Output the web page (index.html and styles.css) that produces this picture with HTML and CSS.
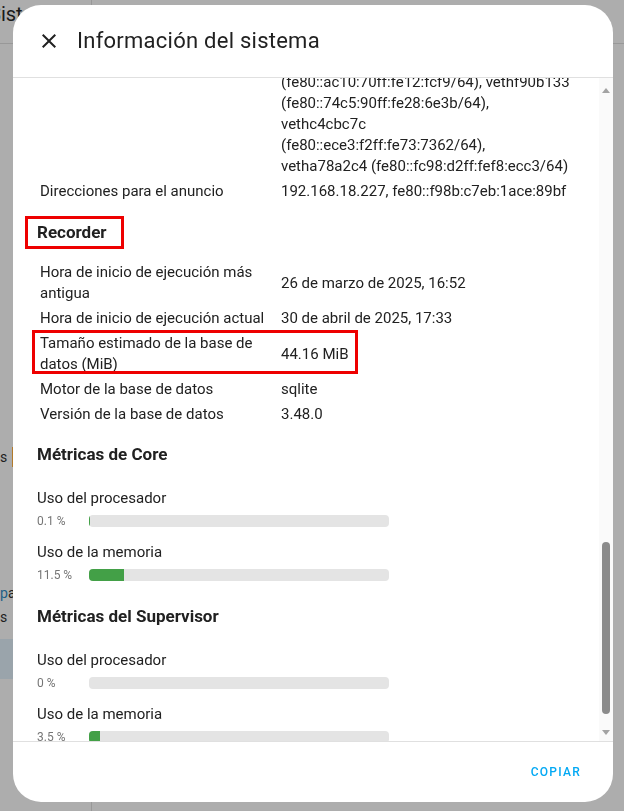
FILE: index.html
```html
<!DOCTYPE html>
<html>
<head>
<meta charset="UTF-8">
<title>Información del sistema</title>
<meta name="viewport" content="width=device-width, initial-scale=1.0">
<link rel="stylesheet" href="styles.css">
</head>
<body>

	<div class="page">
		<aside class="page-side">
			<div class="side-head">Sistema</div>
			<div class="side-item side-warn">s</div>
			<div class="side-item side-link"><span>p</span>a</div>
			<div class="side-item side-last">s</div>
			<div class="side-block"></div>
		</aside>
		<main class="page-main">
			<div class="main-head"></div>
		</main>
	</div>

	<div class="dialog">
		<header class="dialog-head">
			<svg class="close" viewBox="0 0 24 24" width="24" height="24">
				<path d="M19,6.41L17.59,5L12,10.59L6.41,5L5,6.41L10.59,12L5,17.59L6.41,19L12,13.41L17.59,19L19,17.59L13.41,12L19,6.41Z"/>
			</svg>
			<h2 class="dialog-title">Información del sistema</h2>
		</header>

		<div class="dialog-body">
			<div class="scroll">
				<div class="content">

					<table class="info">
						<tr>
							<td></td>
							<td>(fe80::ac10:70ff:fe12:fcf9/64), vethf90b133<br>(fe80::74c5:90ff:fe28:6e3b/64),<br>vethc4cbc7c<br>(fe80::ece3:f2ff:fe73:7362/64),<br>vetha78a2c4 (fe80::fc98:d2ff:fef8:ecc3/64)</td>
						</tr>
						<tr>
							<td>Direcciones para el anuncio</td>
							<td>192.168.18.227, fe80::f98b:c7eb:1ace:89bf</td>
						</tr>
					</table>

					<h3 class="section-title recorder-title">Recorder</h3>

					<table class="info">
						<tr>
							<td>Hora de inicio de ejecución más antigua</td>
							<td>26 de marzo de 2025, 16:52</td>
						</tr>
						<tr>
							<td>Hora de inicio de ejecución actual</td>
							<td>30 de abril de 2025, 17:33</td>
						</tr>
						<tr>
							<td class="marked">Tamaño estimado de la base de datos (MiB)</td>
							<td>44.16 MiB</td>
						</tr>
						<tr>
							<td>Motor de la base de datos</td>
							<td>sqlite</td>
						</tr>
						<tr>
							<td>Versión de la base de datos</td>
							<td>3.48.0</td>
						</tr>
					</table>

					<h3 class="section-title metrics-title">Métricas de Core</h3>

					<div class="metrics">
						<div class="metric">
							<div class="metric-label">Uso del procesador</div>
							<div class="metric-row">
								<span class="metric-value">0.1 %</span>
								<div class="bar"><div class="bar-fill" style="width: 0.1%"></div></div>
							</div>
						</div>
						<div class="metric">
							<div class="metric-label">Uso de la memoria</div>
							<div class="metric-row">
								<span class="metric-value">11.5 %</span>
								<div class="bar"><div class="bar-fill" style="width: 11.5%"></div></div>
							</div>
						</div>
					</div>

					<h3 class="section-title metrics-title next-title">Métricas del Supervisor</h3>

					<div class="metrics">
						<div class="metric">
							<div class="metric-label">Uso del procesador</div>
							<div class="metric-row">
								<span class="metric-value">0 %</span>
								<div class="bar"><div class="bar-fill" style="width: 0%"></div></div>
							</div>
						</div>
						<div class="metric">
							<div class="metric-label">Uso de la memoria</div>
							<div class="metric-row">
								<span class="metric-value">3.5 %</span>
								<div class="bar"><div class="bar-fill" style="width: 3.5%"></div></div>
							</div>
						</div>
					</div>

				</div>
			</div>

			<div class="scrollbar">
				<div class="sb-up"></div>
				<div class="sb-track"><div class="sb-thumb"></div></div>
				<div class="sb-down"></div>
			</div>
		</div>

		<footer class="dialog-foot">
			<button type="button" class="copy">Copiar</button>
		</footer>
	</div>

</body>
</html>
```

FILE: styles.css
```css
body {
	margin: 0;
	font-family: Roboto, "Noto Sans", sans-serif;
	color: #212121;
	overflow: hidden;
}

/* page behind the dialog, under the scrim */

.page {
	display: grid;
	grid-template-columns: 92px 1fr;
	height: 100vh;
	background: #adadad;
}

.page-side {
	border-right: 1px solid #989898;
	overflow: hidden;
}

.side-head {
	height: 43px;
	border-bottom: 1px solid #989898;
	font-size: 20px;
	line-height: 28px;
	text-indent: -11px;
	color: #1a1a1a;
}

.side-item {
	font-size: 14px;
	line-height: 20px;
	color: #1e1e1e;
}

.side-warn {
	width: 12px;
	margin-top: 403px;
	border-right: 1px solid #b27a2a;
}

.side-link {
	margin-top: 116px;
}

.side-link span {
	color: #1d5f86;
}

.side-last {
	margin-top: 4px;
}

.side-block {
	width: 13px;
	height: 40px;
	margin-top: 12px;
	background: #9aa4ab;
	border-bottom: 18px solid #adadad;
	box-shadow: 0 19px 0 -18px #989898;
}

.main-head {
	height: 43px;
	border-bottom: 1px solid #989898;
}

/* dialog */

.dialog {
	position: fixed;
	top: 5px;
	left: 13px;
	width: 600px;
	height: 797px;
	display: flex;
	flex-direction: column;
	background: #fff;
	border-radius: 28px;
	overflow: hidden;
}

.dialog-head {
	display: flex;
	align-items: center;
	gap: 16px;
	height: 72px;
	padding: 0 24px;
	border-bottom: 1px solid #e0e0e0;
	flex-shrink: 0;
}

.close {
	fill: #212121;
	flex-shrink: 0;
}

.dialog-title {
	margin: 0;
	font-size: 22px;
	font-weight: 400;
	line-height: 28px;
	letter-spacing: 0.25px;
}

.dialog-body {
	flex: 1;
	display: flex;
	min-height: 0;
}

.scroll {
	flex: 1;
	overflow: hidden;
	padding: 0 24px;
}

.content {
	position: relative;
	margin-top: -8px;
}

.info {
	width: 100%;
	border-collapse: collapse;
	font-size: 15px;
	line-height: 21px;
}

.info td {
	padding: 2px 3px;
	vertical-align: middle;
}

.info td:first-child {
	width: 235px;
}

.section-title {
	margin: 16px 0;
	font-size: 17px;
	font-weight: 700;
	line-height: 24px;
}

.metrics-title {
	margin: 15px 0 22px;
}

.next-title {
	margin-top: 19px;
}

.metrics {
	display: flex;
	flex-direction: column;
	gap: 11px;
}

.metric-label {
	font-size: 15px;
	line-height: 20px;
}

.metric-row {
	display: flex;
	align-items: center;
	height: 20px;
	margin-top: 3px;
}

.metric-value {
	width: 52px;
	font-size: 12px;
	color: #757575;
}

.bar {
	width: 300px;
	height: 12px;
	background: #e4e4e4;
	border-radius: 4px;
	overflow: hidden;
}

.bar-fill {
	height: 100%;
	background: #43a047;
}

/* red marks drawn on the screenshot */

.recorder-title {
	position: relative;
	display: inline-block;
}

.recorder-title::after {
	content: "";
	position: absolute;
	left: -12px;
	top: -4px;
	width: 99px;
	height: 33px;
	border: 3px solid #ee0000;
	box-sizing: border-box;
}

.marked {
	position: relative;
}

.marked::after {
	content: "";
	position: absolute;
	left: -5px;
	top: -1px;
	width: 326px;
	height: 44px;
	border: 3px solid #ee0000;
	box-sizing: border-box;
}

/* scrollbar */

.scrollbar {
	width: 14px;
	display: flex;
	flex-direction: column;
	align-items: center;
	padding: 10px 0 6px;
	box-sizing: border-box;
	background: #fafafa;
}

.sb-up,
.sb-down {
	width: 0;
	height: 0;
	border-left: 4.5px solid transparent;
	border-right: 4.5px solid transparent;
}

.sb-up {
	border-bottom: 5px solid #a3a3a3;
}

.sb-down {
	border-top: 5px solid #a3a3a3;
}

.sb-track {
	flex: 1;
	display: flex;
	flex-direction: column;
	justify-content: flex-end;
}

.sb-thumb {
	width: 8px;
	height: 172px;
	margin-bottom: 16px;
	border-radius: 4px;
	background: #8b8b8b;
}

/* footer */

.dialog-foot {
	display: flex;
	justify-content: flex-end;
	align-items: center;
	height: 61px;
	padding: 0 24px;
	box-sizing: border-box;
	border-top: 1px solid #e0e0e0;
	flex-shrink: 0;
}

.copy {
	padding: 8px;
	border: none;
	background: none;
	font-family: inherit;
	font-size: 12px;
	font-weight: 500;
	letter-spacing: 1.25px;
	text-transform: uppercase;
	color: #03a9f4;
}
```
